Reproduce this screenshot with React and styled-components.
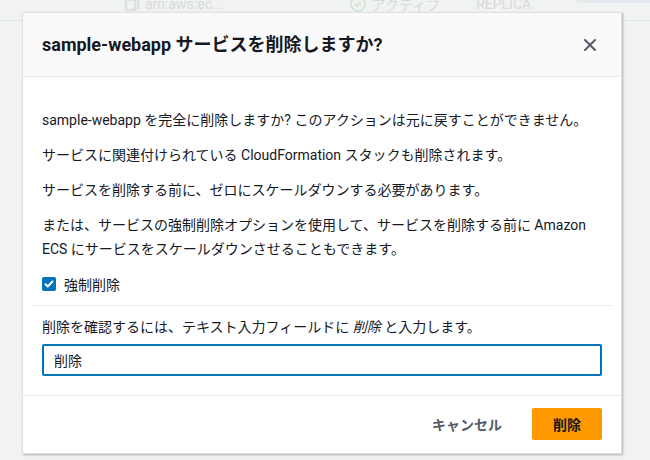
import React from "react";
import styled, { createGlobalStyle } from "styled-components";

const GlobalStyle = createGlobalStyle`
  html, body {
    margin: 0;
    padding: 0;
    background: #f1f2f2;
    font-family: Roboto, "Noto Sans CJK JP", sans-serif;
    color: #16191f;
  }
`;

const Page = styled.div`
  position: relative;
  width: 650px;
  height: 460px;
  overflow: hidden;
  background: #f1f2f2;
`;

const PageRow = styled.div`
  display: flex;
  align-items: center;
  height: 33px;
  border-bottom: 1px solid #e3e6e6;
  margin-top: -13px;
  font-size: 14px;
  color: #d6dada;
`;

const PageCell = styled.div`
  display: flex;
  align-items: center;
  gap: 6px;
  width: ${({ w }) => w}px;
  padding-left: ${({ pad }) => pad || 0}px;
`;

const PageBadge = styled.div`
  margin-left: auto;
  width: 86px;
  height: 16px;
  margin-top: -17px;
  background: #e4e9ee;
`;

const Overlay = styled.div`
  position: absolute;
  inset: 0;
  padding: 12px 0 0 22px;
`;

const Modal = styled.div`
  width: 600px;
  background: #fff;
  border: 1px solid #dfe2e2;
  box-shadow: 1px 1px 2px rgba(0, 28, 36, 0.3);
  box-sizing: border-box;
`;

const Header = styled.div`
  display: flex;
  align-items: center;
  justify-content: space-between;
  height: 64px;
  padding: 0 19px;
  background: #fafafa;
  border-bottom: 1px solid #eaeded;
  box-sizing: border-box;
`;

const Title = styled.h2`
  margin: 0;
  font-size: 18px;
  font-weight: 700;
  line-height: 24px;
  color: #16191f;
`;

const CloseButton = styled.button`
  display: flex;
  align-items: center;
  justify-content: center;
  width: 24px;
  height: 24px;
  padding: 0;
  border: none;
  background: none;
  color: #545b64;
  cursor: pointer;
`;

const Body = styled.div`
  padding: 31px 19px 19px;
`;

const Paragraph = styled.p`
  margin: 0 0 ${({ last }) => (last ? 0 : 11)}px;
  font-size: 14px;
  line-height: 24px;
  color: #16191f;
`;

const CheckRow = styled.label`
  display: flex;
  align-items: center;
  gap: 8px;
  height: 22px;
  margin-top: 12px;
  font-size: 14px;
  color: #16191f;
`;

const Box = styled.span`
  display: flex;
  align-items: center;
  justify-content: center;
  width: 14px;
  height: 14px;
  border-radius: 2px;
  background: #0073bb;
`;

const Divider = styled.div`
  height: 1px;
  margin: 10px -10px 0;
  background: #eaeded;
`;

const FieldLabel = styled.div`
  margin-top: 10px;
  font-size: 14px;
  line-height: 22px;
  color: #16191f;

  em {
    font-style: italic;
  }
`;

const Input = styled.input`
  display: block;
  width: 100%;
  height: 32px;
  margin-top: 6px;
  padding: 0 10px;
  box-sizing: border-box;
  border: 2px solid #0073bb;
  border-radius: 2px;
  font-family: Roboto, "Noto Sans CJK JP", sans-serif;
  font-size: 14px;
  color: #16191f;
  outline: none;
`;

const Footer = styled.div`
  display: flex;
  justify-content: flex-end;
  align-items: center;
  padding: 12px 19px 13px;
  border-top: 1px solid #eaeded;
`;

const Button = styled.button`
  height: 32px;
  padding: 0 ${({ primary }) => (primary ? "0" : "20px")};
  width: ${({ primary }) => (primary ? "70px" : "auto")};
  margin-left: ${({ primary }) => (primary ? "10px" : "0")};
  border: none;
  border-radius: 2px;
  background: ${({ primary }) => (primary ? "#ff9900" : "transparent")};
  color: ${({ primary }) => (primary ? "#16191f" : "#545b64")};
  font-family: Roboto, "Noto Sans CJK JP", sans-serif;
  font-size: 14px;
  font-weight: 700;
  cursor: pointer;
`;

const CopyIcon = () => (
  <svg width="14" height="14" viewBox="0 0 14 14" fill="none" stroke="#d6dada" strokeWidth="1.5">
    <rect x="1" y="3" width="9" height="10" />
    <path d="M4 3V1h9v10h-3" />
  </svg>
);

const StatusIcon = () => (
  <svg width="16" height="16" viewBox="0 0 16 16" fill="none" stroke="#d2e2d2" strokeWidth="1.5">
    <circle cx="8" cy="8" r="7" />
    <path d="M5 8l2 2 4-4" />
  </svg>
);

const CloseIcon = () => (
  <svg width="14" height="14" viewBox="0 0 14 14" fill="none" stroke="currentColor" strokeWidth="2" strokeLinecap="round">
    <path d="M2 2l10 10M12 2L2 12" />
  </svg>
);

const CheckIcon = () => (
  <svg width="10" height="10" viewBox="0 0 10 10" fill="none" stroke="#fff" strokeWidth="2" strokeLinecap="round" strokeLinejoin="round">
    <path d="M1.5 5.2l2.3 2.3L8.5 2.5" />
  </svg>
);

export default function App() {
  return (
    <Page>
      <GlobalStyle />
      <PageRow>
        <PageCell w={266} pad={125}>
          <CopyIcon />
          arn:aws:ec...
        </PageCell>
        <PageCell w={150}>
          <StatusIcon />
          アクティブ
        </PageCell>
        <PageCell w={120}>REPLICA</PageCell>
        <PageBadge />
      </PageRow>
      <Overlay>
        <Modal>
          <Header>
            <Title>sample-webapp サービスを削除しますか?</Title>
            <CloseButton aria-label="閉じる">
              <CloseIcon />
            </CloseButton>
          </Header>
          <Body>
            <Paragraph>
              sample-webapp を完全に削除しますか? このアクションは元に戻すことができません。
            </Paragraph>
            <Paragraph>
              サービスに関連付けられている CloudFormation スタックも削除されます。
            </Paragraph>
            <Paragraph>
              サービスを削除する前に、ゼロにスケールダウンする必要があります。
            </Paragraph>
            <Paragraph last>
              または、サービスの強制削除オプションを使用して、サービスを削除する前に Amazon
              ECS にサービスをスケールダウンさせることもできます。
            </Paragraph>
            <CheckRow>
              <Box>
                <CheckIcon />
              </Box>
              強制削除
            </CheckRow>
            <Divider />
            <FieldLabel>
              削除を確認するには、テキスト入力フィールドに <em>削除</em> と入力します。
            </FieldLabel>
            <Input defaultValue="削除" />
          </Body>
          <Footer>
            <Button>キャンセル</Button>
            <Button primary>削除</Button>
          </Footer>
        </Modal>
      </Overlay>
    </Page>
  );
}
